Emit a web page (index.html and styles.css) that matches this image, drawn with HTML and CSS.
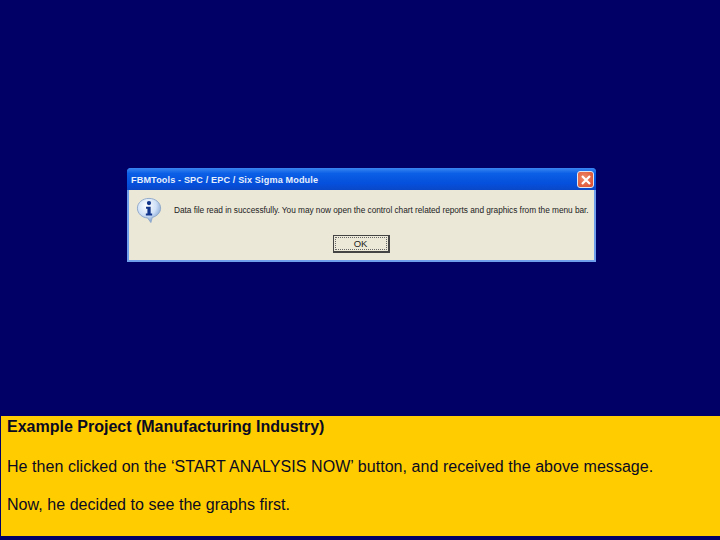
FILE: index.html
```html
<!DOCTYPE html>
<html lang="en">
<head>
<meta charset="utf-8">
<title>Example Project</title>
<link rel="stylesheet" href="styles.css">
</head>
<body>
<main class="slide">
  <section class="stage">
    <div class="dialog">
      <div class="titlebar">
        <span class="title">FBMTools - SPC / EPC / Six Sigma Module</span>
        <span class="close">
          <svg viewBox="0 0 12 12" width="12" height="12"><path d="M2 2L10 10M10 2L2 10" stroke="#fff" stroke-width="2.200" fill="none"/></svg>
        </span>
      </div>
      <div class="body">
        <div class="message">
          <svg class="icon" viewBox="0 0 28 28" width="26" height="26">
            <defs>
              <radialGradient id="bubble" cx="40%" cy="30%" r="75%">
                <stop offset="0" stop-color="#ffffff"/>
                <stop offset="0.55" stop-color="#cfe0f7"/>
                <stop offset="1" stop-color="#6f93c9"/>
              </radialGradient>
            </defs>
            <path d="M14 1.500C7 1.500 1.500 6.200 1.500 12S7 22.500 12.500 22.500L16 27.500L17.500 22C23 20.500 26.500 16.500 26.500 12C26.500 6.200 21 1.500 14 1.500Z" fill="url(#bubble)" stroke="#8ea6c8" stroke-width="1"/>
            <circle cx="14" cy="6.500" r="2.300" fill="#12348a"/>
            <path d="M10.800 10.500H15.800V17.800H17.400V20H10.600V17.800H12.300V12.700H10.800Z" fill="#12348a"/>
          </svg>
          <p class="text">Data file read in successfully. You may now open the control chart related reports and graphics from the menu bar.</p>
        </div>
        <div class="actions">
          <button class="ok" type="button"><span class="ok-inner">OK</span></button>
        </div>
      </div>
    </div>
  </section>
  <section class="caption">
    <h1 class="heading">Example Project (Manufacturing Industry)</h1>
    <p class="line">He then clicked on the ‘START ANALYSIS NOW’ button, and received the above message.</p>
    <p class="line">Now, he decided to see the graphs first.</p>
  </section>
</main>
</body>
</html>
```
FILE: styles.css
```css
* { box-sizing: border-box; }
html, body { margin: 0; padding: 0; }
body { width: 720px; height: 540px; background: #000066; overflow: hidden; }
.slide { display: flex; flex-direction: column; width: 720px; height: 540px; }
.stage { height: 416px; padding: 168px 0 0 127px; }
.dialog {
  width: 469px; height: 94px;
  border-radius: 4px 4px 0 0;
  display: flex; flex-direction: column;
  background: #3f7fe8;
}
.titlebar {
  height: 22px; flex: none;
  display: flex; align-items: center; justify-content: space-between;
  padding: 1px 2px 0 4px;
  background: linear-gradient(180deg, #3a86f2 0%, #0b5fe6 25%, #0550dc 70%, #0a47c8 100%);
  border-radius: 4px 4px 0 0;
}
.title {
  font: bold 9.1px/12px "Liberation Sans", Arial, sans-serif;
  letter-spacing: 0.14px;
  color: #e6effc; white-space: nowrap;
}
.close {
  width: 17px; height: 17px; display: flex; align-items: center; justify-content: center;
  background: radial-gradient(circle at 40% 40%, #ee8a6a, #d9482a);
  border: 1px solid #dfe6f2; border-radius: 3px;
}
.body {
  flex: 1; background: #ebe8d8;
  border: 2px solid #6f9eec; border-top: 0;
  display: flex; flex-direction: column;
  padding: 6px 6px 0 7px;
}
.message { display: flex; align-items: flex-start; height: 39px; }
.icon { flex: none; margin-right: 12px; margin-top: 1px; }
.text {
  margin: 8px 0 0; font: 8.3px/12px "Liberation Sans", Arial, sans-serif;
  letter-spacing: -0.035px;
  color: #222; white-space: nowrap;
}
.actions { display: flex; justify-content: center; padding-right: 2px; margin-top: 0; }
.ok {
  width: 57px; height: 18px; padding: 1px;
  background: #ece9d8; border: 1px solid #444;
  border-right-width: 2px; border-bottom-width: 2px;
  font: 9.5px/12px "Liberation Sans", Arial, sans-serif; color: #222;
}
.ok-inner { display: block; height: 100%; border: 1px dotted #666; line-height: 11px; }
.caption {
  height: 120px; margin-left: 1px; background: #ffcc00;
  padding: 2px 0 0 6px;
  font-family: "Liberation Sans", Arial, sans-serif;
  color: #0a0a22;
}
.heading { margin: 0; font-size: 16px; font-weight: bold; line-height: 17px; }
.line { margin: 23px 0 0; font-size: 16px; letter-spacing: 0.05px; line-height: 17px; white-space: nowrap; }
.line + .line { margin-top: 21px; }
```
